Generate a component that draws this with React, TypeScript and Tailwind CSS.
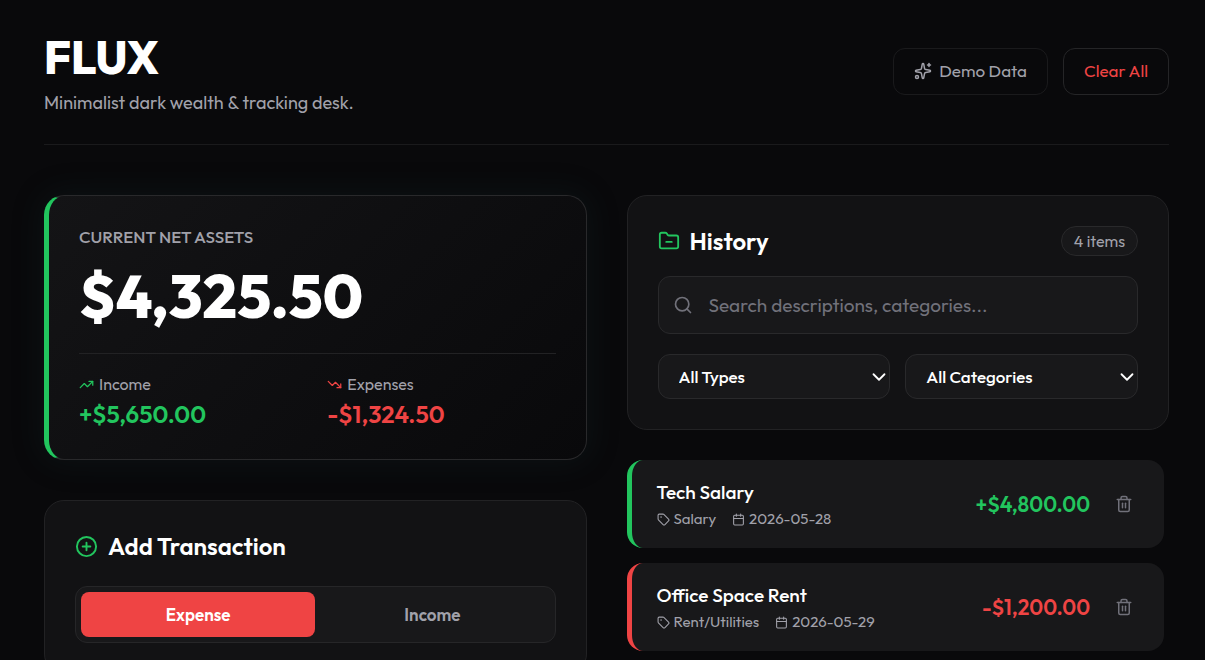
import { useState } from 'react';
import {
  Calendar,
  ChevronDown,
  CirclePlus,
  FolderMinus,
  Search,
  Sparkles,
  Tag,
  Trash2,
  TrendingDown,
  TrendingUp,
} from 'lucide-react';

type TxType = 'income' | 'expense';

interface Transaction {
  id: number;
  title: string;
  category: string;
  date: string;
  amount: number;
  type: TxType;
}

const TRANSACTIONS: Transaction[] = [
  { id: 1, title: 'Tech Salary', category: 'Salary', date: '2026-05-28', amount: 4800, type: 'income' },
  { id: 2, title: 'Office Space Rent', category: 'Rent/Utilities', date: '2026-05-29', amount: 1200, type: 'expense' },
];

const TYPES = ['All Types', 'Income', 'Expense'];
const CATEGORIES = ['All Categories', 'Salary', 'Rent/Utilities'];

function money(n: number) {
  return '$' + n.toLocaleString('en-US', { minimumFractionDigits: 2, maximumFractionDigits: 2 });
}

function Header() {
  return (
    <header className="flex items-center justify-between border-b border-[#1a1a1c] pt-[26px] pb-7 mb-[50px]">
      <div>
        <h1 className="text-[45px] leading-[64px] font-extrabold text-white">FLUX</h1>
        <p className="text-[18px] leading-[26px] text-[#a1a1aa]">Minimalist dark wealth &amp; tracking desk.</p>
      </div>
      <div className="flex gap-[15px]">
        <button className="flex h-[47px] items-center gap-[7px] rounded-xl border border-[#1a1a1c] px-5 text-[17px] text-[#a1a1aa]">
          <Sparkles size={18} />
          Demo Data
        </button>
        <button className="h-[47px] rounded-xl border border-[#252527] px-5 text-[17px] text-[#ef4444]">
          Clear All
        </button>
      </div>
    </header>
  );
}

function NetAssets() {
  return (
    <section className="rounded-[20px] border border-l-[5px] border-[#29292b] border-l-[#22c55e] bg-linear-135 from-[#141416] to-[#09090b] p-[30px] shadow-[0_0_30px_5px_rgba(30,60,60,0.15)]">
      <h2 className="text-[17px] leading-[22px] font-medium text-[#a1a1aa]">CURRENT NET ASSETS</h2>
      <div className="mt-3 text-[60px] leading-[72px] font-extrabold text-white">{money(4325.5)}</div>
      <div className="mt-[21px] grid grid-cols-2 gap-5 border-t border-[#222224] pt-5">
        <div>
          <div className="flex items-center gap-[5px] text-[16px] leading-5 text-[#a1a1aa]">
            <TrendingUp size={15} className="text-[#22c55e]" />
            Income
          </div>
          <div className="mt-[5px] text-[24px] leading-[30px] font-semibold text-[#22c55e]">+{money(5650)}</div>
        </div>
        <div>
          <div className="flex items-center gap-[5px] text-[16px] leading-5 text-[#a1a1aa]">
            <TrendingDown size={15} className="text-[#ef4444]" />
            Expenses
          </div>
          <div className="mt-[5px] text-[24px] leading-[30px] font-semibold text-[#ef4444]">-{money(1324.5)}</div>
        </div>
      </div>
    </section>
  );
}

function AddTransaction() {
  const [type, setType] = useState<TxType>('expense');

  return (
    <section className="rounded-[20px] border border-[#222224] bg-[#121214] p-[30px]">
      <h2 className="mb-[25px] flex items-center gap-[10px] text-[24px] leading-[30px] font-semibold text-white">
        <CirclePlus size={23} className="text-[#22c55e]" />
        Add Transaction
      </h2>
      <div className="grid grid-cols-2 rounded-xl border border-[#262628] bg-[#18181a] p-[5px]">
        <button
          onClick={() => setType('expense')}
          className={`h-[45px] rounded-lg text-[17px] font-semibold ${type === 'expense' ? 'bg-[#ef4444] text-white' : 'text-[#a1a1aa]'}`}
        >
          Expense
        </button>
        <button
          onClick={() => setType('income')}
          className={`h-[45px] rounded-lg text-[17px] font-semibold ${type === 'income' ? 'bg-[#22c55e] text-white' : 'text-[#a1a1aa]'}`}
        >
          Income
        </button>
      </div>
    </section>
  );
}

function FilterSelect({ label, options }: { label: string; options: string[] }) {
  return (
    <div className="relative">
      <select
        aria-label={label}
        className="h-[45px] w-full appearance-none rounded-xl border border-[#29292b] bg-[#18181a] px-5 text-[17px] font-medium text-white"
      >
        {options.map((o) => (
          <option key={o}>{o}</option>
        ))}
      </select>
      <ChevronDown
        size={22}
        className="pointer-events-none absolute inset-y-0 right-0 my-auto text-white"
      />
    </div>
  );
}

function HistoryPanel() {
  const [query, setQuery] = useState('');

  return (
    <section className="rounded-[20px] border border-[#222224] bg-[#121214] p-[30px]">
      <div className="flex items-center justify-between">
        <h2 className="flex items-center gap-[10px] text-[24px] leading-[30px] font-semibold text-white">
          <FolderMinus size={22} className="text-[#22c55e]" />
          History
        </h2>
        <span className="rounded-full border border-[#29292b] bg-[#18181a] px-3 text-[16px] leading-7 text-[#a1a1aa]">
          4 items
        </span>
      </div>

      <label className="mt-5 flex h-[58px] items-center gap-4 rounded-xl border border-[#29292b] bg-[#18181a] px-[14px]">
        <Search size={20} className="flex-none text-[#71717a]" />
        <input
          type="text"
          aria-label="Search transactions"
          value={query}
          onChange={(e) => setQuery(e.target.value)}
          placeholder="Search descriptions, categories..."
          className="min-w-0 flex-1 bg-transparent text-[19px] text-white outline-none placeholder:text-[#71717a]"
        />
      </label>

      <div className="mt-5 grid grid-cols-2 gap-[15px]">
        <FilterSelect label="Type" options={TYPES} />
        <FilterSelect label="Category" options={CATEGORIES} />
      </div>
    </section>
  );
}

function TransactionRow({ tx }: { tx: Transaction }) {
  const income = tx.type === 'income';

  return (
    <li
      className={`flex h-[88px] items-center justify-between rounded-2xl border-l-[5px] bg-[#18181a] px-[25px] ${income ? 'border-[#22c55e]' : 'border-[#ef4444]'}`}
    >
      <div>
        <div className="text-[19px] leading-[26px] font-medium text-white">{tx.title}</div>
        <div className="mt-1 flex items-center gap-4 text-[15px] leading-5 text-[#a1a1aa]">
          <span className="flex items-center gap-1">
            <Tag size={13} />
            {tx.category}
          </span>
          <span className="flex items-center gap-1">
            <Calendar size={13} />
            {tx.date}
          </span>
        </div>
      </div>
      <div className="flex items-center gap-[19px]">
        <span className={`text-[21px] leading-7 font-semibold ${income ? 'text-[#22c55e]' : 'text-[#ef4444]'}`}>
          {income ? '+' : '-'}
          {money(tx.amount)}
        </span>
        <button aria-label={`Delete ${tx.title}`} className="flex size-[30px] items-center justify-center text-[#71717a]">
          <Trash2 size={18} />
        </button>
      </div>
    </li>
  );
}

export default function App() {
  return (
    <div className="h-screen overflow-y-auto bg-[#09090b] pr-9 pl-11 font-['Outfit','Lato',sans-serif] [scrollbar-width:none]">
      <Header />
      <main className="grid grid-cols-2 items-start gap-10 pb-11">
        <div className="flex flex-col gap-10">
          <NetAssets />
          <AddTransaction />
        </div>
        <div>
          <HistoryPanel />
          <ul className="mt-[30px] flex flex-col gap-[15px] pr-[5px]">
            {TRANSACTIONS.map((tx) => (
              <TransactionRow key={tx.id} tx={tx} />
            ))}
          </ul>
        </div>
      </main>
    </div>
  );
}
